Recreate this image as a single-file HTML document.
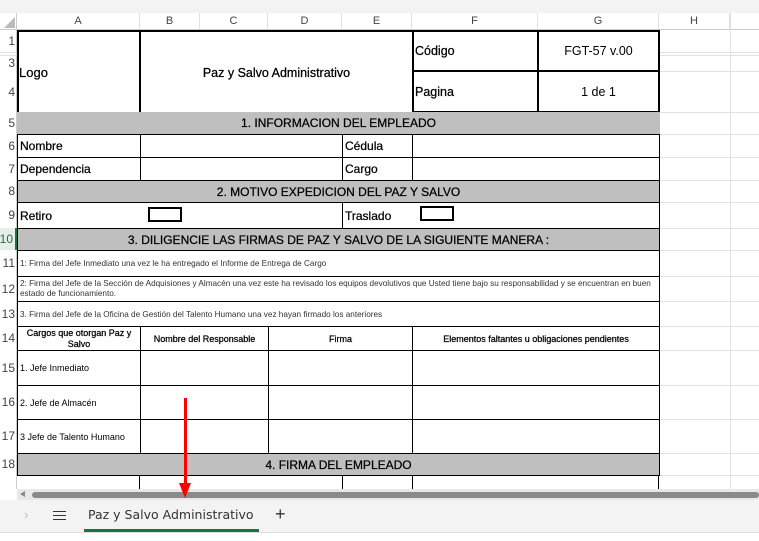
<!DOCTYPE html>
<html><head><meta charset="utf-8">
<style>
*{box-sizing:border-box;margin:0;padding:0}
body{width:759px;height:541px;overflow:hidden;background:#fff;font-family:"Liberation Sans",Arial,sans-serif;position:relative;color:#000}
.a{position:absolute}
.hl{position:absolute;height:1px;background:#e1e1e1}
.vl{position:absolute;width:1px;background:#e1e1e1}
.ch{position:absolute;top:13px;height:17px;font-size:11px;color:#444;text-align:center;line-height:17px;border-right:1px solid #e1e1e1}
.rh{position:absolute;left:0;width:17px;font-size:12px;color:#444;text-align:right;padding-right:2px;display:flex;align-items:center;justify-content:flex-end}
.c{position:absolute;border:1px solid #000;display:flex;align-items:center;font-size:12px;padding-left:2px;white-space:nowrap;overflow:hidden}
.g{background:#bfbfbf;justify-content:center;font-size:12px;padding-left:0;-webkit-text-stroke:0.25px #000}
.ctr{justify-content:center;padding-left:0}
.s{font-size:8.2px;color:#333}
.b{-webkit-text-stroke:0.25px #000}
</style></head><body>
<div class="a" style="left:0;top:0;width:759px;height:13px;background:#f3f3f3"></div>
<div class="a" style="left:0;top:13px;width:17px;height:17px;background:#fff"></div>
<div class="a" style="left:4px;top:17px;width:0;height:0;border-left:11px solid transparent;border-bottom:11px solid #bbb"></div>
<div class="ch" style="left:17px;width:123px">A</div>
<div class="ch" style="left:140px;width:60px">B</div>
<div class="ch" style="left:200px;width:68px">C</div>
<div class="ch" style="left:268px;width:74px">D</div>
<div class="ch" style="left:342px;width:70px">E</div>
<div class="ch" style="left:412px;width:126px">F</div>
<div class="ch" style="left:538px;width:121px">G</div>
<div class="ch" style="left:659px;width:71px">H</div>
<div class="a" style="left:0;top:29px;width:759px;height:1px;background:#ccc"></div>
<div class="a" style="left:16px;top:13px;width:1px;height:476px;background:#ccc"></div>
<div class="vl" style="left:730px;top:13px;height:476px"></div>
<div class="hl" style="left:659px;top:52px;width:100px"></div>
<div class="hl" style="left:659px;top:55px;width:100px"></div>
<div class="hl" style="left:659px;top:71px;width:100px"></div>
<div class="hl" style="left:659px;top:112px;width:100px"></div>
<div class="hl" style="left:659px;top:134px;width:100px"></div>
<div class="hl" style="left:659px;top:157px;width:100px"></div>
<div class="hl" style="left:659px;top:180px;width:100px"></div>
<div class="hl" style="left:659px;top:202px;width:100px"></div>
<div class="hl" style="left:659px;top:228px;width:100px"></div>
<div class="hl" style="left:659px;top:250px;width:100px"></div>
<div class="hl" style="left:659px;top:276px;width:100px"></div>
<div class="hl" style="left:659px;top:301px;width:100px"></div>
<div class="hl" style="left:659px;top:326px;width:100px"></div>
<div class="hl" style="left:659px;top:350px;width:100px"></div>
<div class="hl" style="left:659px;top:385px;width:100px"></div>
<div class="hl" style="left:659px;top:419px;width:100px"></div>
<div class="hl" style="left:659px;top:453px;width:100px"></div>
<div class="hl" style="left:659px;top:475px;width:100px"></div>
<div class="hl" style="left:0;top:52px;width:17px"></div>
<div class="hl" style="left:0;top:55px;width:17px"></div>
<div class="rh" style="top:30px;height:22px">1</div>
<div class="rh" style="top:55px;height:16px">3</div>
<div class="rh" style="top:71px;height:41px">4</div>
<div class="rh" style="top:112px;height:22px">5</div>
<div class="rh" style="top:134px;height:23px">6</div>
<div class="rh" style="top:157px;height:23px">7</div>
<div class="rh" style="top:180px;height:22px">8</div>
<div class="rh" style="top:202px;height:26px">9</div>
<div class="rh" style="top:228px;height:22px;background:#e3efe7;color:#1e7145;border-right:2px solid #1e7145">10</div>
<div class="rh" style="top:250px;height:26px">11</div>
<div class="rh" style="top:276px;height:25px">12</div>
<div class="rh" style="top:301px;height:25px">13</div>
<div class="rh" style="top:326px;height:24px">14</div>
<div class="rh" style="top:350px;height:35px">15</div>
<div class="rh" style="top:385px;height:34px">16</div>
<div class="rh" style="top:419px;height:34px">17</div>
<div class="rh" style="top:453px;height:22px">18</div>

<div class="c b" style="left:17px;top:30px;width:124px;height:83px;border-width:2px 2px 0 2px;font-size:13px;padding-left:0">Logo</div>
<div class="c ctr b" style="left:139px;top:30px;width:275px;height:83px;border-width:2px 0 0 0;font-size:12.5px">Paz y Salvo Administrativo</div>
<div class="c b" style="left:412px;top:30px;width:127px;height:42px;border-width:2px;font-size:12.5px;padding-left:1px">Código</div>
<div class="c ctr" style="left:537px;top:30px;width:123px;height:42px;border-width:2px;font-size:12.5px">FGT-57 v.00</div>
<div class="c b" style="left:412px;top:70px;width:127px;height:43px;border-width:2px;font-size:12.5px;padding-left:1px">Pagina</div>
<div class="c ctr" style="left:537px;top:70px;width:123px;height:43px;border-width:2px;font-size:12.5px">1 de 1</div>

<div class="c g" style="left:17px;top:112px;width:643px;height:23px;border-width:0 0 1px 0">1. INFORMACION DEL EMPLEADO</div>
<div class="c b" style="left:17px;top:134px;width:124px;height:24px">Nombre</div>
<div class="c" style="left:140px;top:134px;width:203px;height:24px"></div>
<div class="c b" style="left:342px;top:134px;width:71px;height:24px">Cédula</div>
<div class="c" style="left:412px;top:134px;width:248px;height:24px"></div>
<div class="c b" style="left:17px;top:157px;width:124px;height:24px">Dependencia</div>
<div class="c" style="left:140px;top:157px;width:203px;height:24px"></div>
<div class="c b" style="left:342px;top:157px;width:71px;height:24px">Cargo</div>
<div class="c" style="left:412px;top:157px;width:248px;height:24px"></div>
<div class="c g" style="left:17px;top:180px;width:643px;height:23px">2. MOTIVO EXPEDICION DEL PAZ Y SALVO</div>
<div class="c b" style="left:17px;top:202px;width:326px;height:27px">Retiro</div>
<div class="a" style="left:148px;top:207px;width:34px;height:15px;border:2px solid #000"></div>
<div class="c b" style="left:342px;top:202px;width:318px;height:27px">Traslado</div>
<div class="a" style="left:420px;top:206px;width:34px;height:15px;border:2px solid #000"></div>
<div class="c g" style="left:17px;top:228px;width:643px;height:23px">3. DILIGENCIE LAS FIRMAS DE PAZ Y SALVO DE LA SIGUIENTE MANERA :</div>
<div class="c s" style="left:17px;top:250px;width:643px;height:27px">1: Firma del Jefe Inmediato una vez le ha entregado el Informe de Entrega de Cargo</div>
<div class="c s" style="left:17px;top:276px;width:643px;height:26px;white-space:normal;line-height:10px;align-items:center">2: Firma del Jefe de la Sección de Adquisiones y Almacén una vez este ha revisado los equipos devolutivos que Usted tiene bajo su responsabilidad y se encuentran en buen estado de funcionamiento.</div>
<div class="c s" style="left:17px;top:301px;width:643px;height:26px">3. Firma del Jefe de la Oficina de Gestión del Talento Humano una vez hayan firmado los anteriores</div>
<div class="c ctr b" style="left:17px;top:326px;width:124px;height:25px;font-size:9px;white-space:normal;text-align:center;line-height:11px">Cargos que otorgan Paz y Salvo</div>
<div class="c ctr b" style="left:140px;top:326px;width:129px;height:25px;font-size:9px">Nombre del Responsable</div>
<div class="c ctr b" style="left:268px;top:326px;width:145px;height:25px;font-size:9px">Firma</div>
<div class="c ctr b" style="left:412px;top:326px;width:248px;height:25px;font-size:9px">Elementos faltantes u obligaciones pendientes</div>
<div class="c" style="left:17px;top:350px;width:124px;height:36px;font-size:9px">1. Jefe Inmediato</div>
<div class="c" style="left:140px;top:350px;width:129px;height:36px"></div>
<div class="c" style="left:268px;top:350px;width:145px;height:36px"></div>
<div class="c" style="left:412px;top:350px;width:248px;height:36px"></div>
<div class="c" style="left:17px;top:385px;width:124px;height:35px;font-size:9px">2. Jefe de Almacén</div>
<div class="c" style="left:140px;top:385px;width:129px;height:35px"></div>
<div class="c" style="left:268px;top:385px;width:145px;height:35px"></div>
<div class="c" style="left:412px;top:385px;width:248px;height:35px"></div>
<div class="c" style="left:17px;top:419px;width:124px;height:35px;font-size:9px">3 Jefe de Talento Humano</div>
<div class="c" style="left:140px;top:419px;width:129px;height:35px"></div>
<div class="c" style="left:268px;top:419px;width:145px;height:35px"></div>
<div class="c" style="left:412px;top:419px;width:248px;height:35px"></div>
<div class="c g" style="left:17px;top:453px;width:643px;height:23px">4. FIRMA DEL EMPLEADO</div>
<div class="a" style="left:139px;top:475px;width:1px;height:14px;background:#000"></div>
<div class="a" style="left:342px;top:475px;width:1px;height:14px;background:#000"></div>
<div class="a" style="left:412px;top:475px;width:1px;height:14px;background:#000"></div>
<div class="a" style="left:658px;top:475px;width:1px;height:14px;background:#000"></div>

<div class="a" style="left:17px;top:489px;width:742px;height:11px;background:#e8e8e8"></div>
<div class="a" style="left:20px;top:491px;width:0;height:0;border-top:3px solid transparent;border-bottom:3px solid transparent;border-right:5px solid #888"></div>
<div class="a" style="left:32px;top:492px;width:727px;height:6px;background:#8a8a8a;border-radius:3px"></div>
<div class="a" style="left:0;top:500px;width:759px;height:33px;background:#f3f3f3;border-bottom:1px solid #ddd"></div>
<div class="a" style="left:24px;top:507px;font-size:13px;color:#bbb">›</div>
<div class="a" style="left:53px;top:511px;width:13px;height:1px;background:#333;box-shadow:0 4px 0 #333,0 8px 0 #333"></div>
<div class="a" style="left:88px;top:507px;color:#333;font-family:'DejaVu Sans',sans-serif;font-size:12.5px">Paz y Salvo Administrativo</div>
<div class="a" style="left:84px;top:529px;width:175px;height:3px;background:#1e7145"></div>
<div class="a" style="left:275px;top:504px;font-size:18px;color:#333;font-weight:300">+</div>
<div class="a" style="left:184px;top:398px;width:3px;height:86px;background:#f00"></div>
<div class="a" style="left:179px;top:483px;width:0;height:0;border-left:6px solid transparent;border-right:6px solid transparent;border-top:15px solid #f00"></div>
</body></html>
